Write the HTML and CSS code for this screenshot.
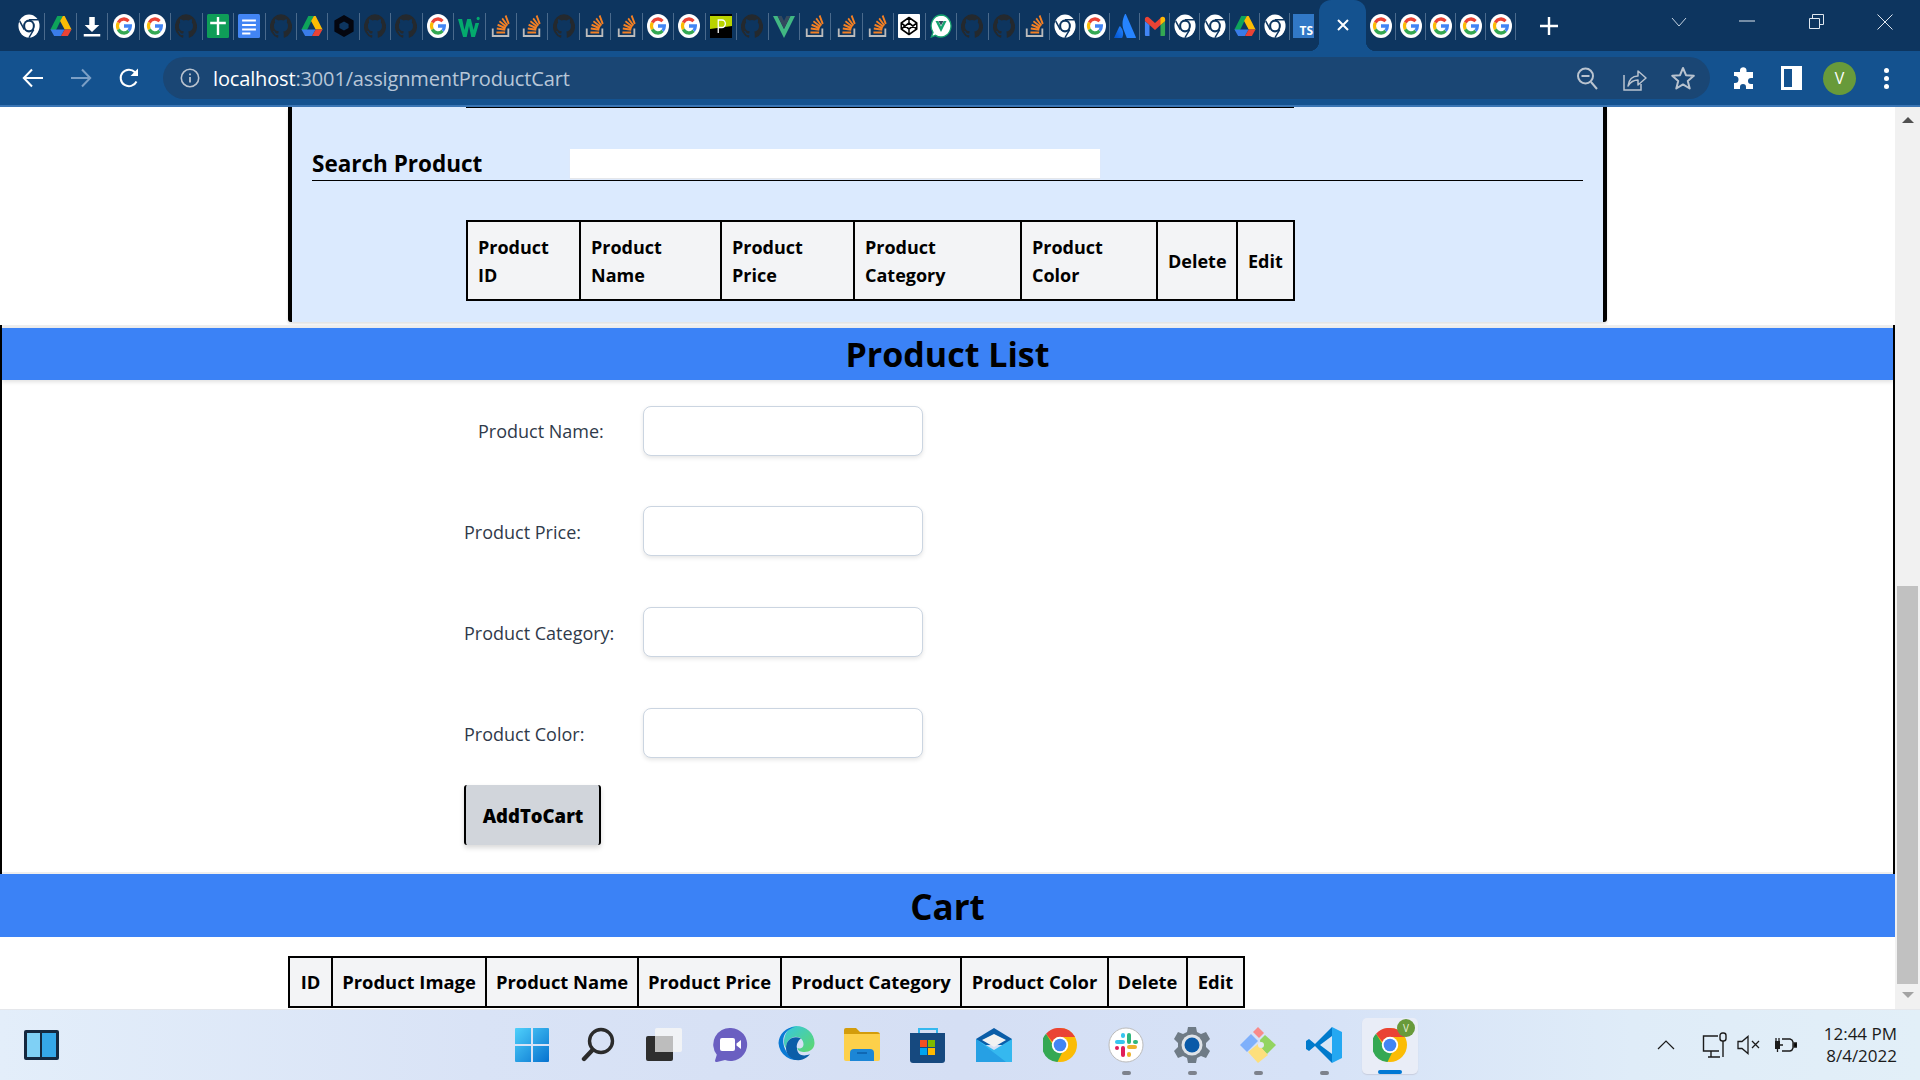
FILE: index.html
```html
<!DOCTYPE html>
<html lang="en">
<head>
<meta charset="UTF-8">
<title>assignmentProductCart</title>
<link rel="stylesheet" href="styles.css">
</head>
<body>
<!-- favicon sprite -->
<svg class="sprite" xmlns="http://www.w3.org/2000/svg">
    <defs>
        <linearGradient id="winGrad" x1="0" y1="0" x2="1" y2="1"><stop offset="0" stop-color="#4fd0fb"/><stop offset="1" stop-color="#0672cf"/></linearGradient>
        <linearGradient id="edgeGrad" x1="0" y1="0" x2="1" y2="1"><stop offset="0" stop-color="#36c7e0"/><stop offset="1" stop-color="#5fd86a"/></linearGradient>
        <linearGradient id="atlGrad" x1="0" y1="1" x2="1" y2="0"><stop offset="0" stop-color="#0052cc"/><stop offset="1" stop-color="#2684ff"/></linearGradient>
    </defs>
    <symbol id="ic-chrome" viewBox="0 0 24 24" preserveAspectRatio="none">
        <circle cx="12" cy="12" r="11.5" fill="#fff"/>
        <circle cx="12" cy="12" r="6.4" fill="#0d355f"/>
        <circle cx="12" cy="12" r="4.2" fill="#fff"/>
        <path d="M12 5.8h10M6.8 15.5 1.8 7M17.2 15.5 12 23.6" stroke="#0d355f" stroke-width="1.5" fill="none"/>
    </symbol>
    <symbol id="ic-drive" viewBox="0 0 24 24" preserveAspectRatio="none">
        <path d="M8 2h6L8 13.5 5.200 18 .5 15.500z" fill="#0ea45a"/>
        <path d="M14 2h2l7.500 13.500h-7.500L11 7z" fill="#fbbc04"/>
        <path d="M.5 15.500H16L12 22H4.500z" fill="#3a7ce8"/>
        <path d="M16 15.500h7.500L19.500 22H12z" fill="#ea4335"/>
    </symbol>
    <symbol id="ic-download" viewBox="0 0 24 24" preserveAspectRatio="none">
        <path d="M9 3h6v8h5l-8 7-8-7h5zM3 20h18v2.500H3z" fill="#fff"/>
    </symbol>
    <symbol id="ic-google" viewBox="0 0 24 24" preserveAspectRatio="none">
        <rect x="0" y="0" width="24" height="24" rx="12" fill="#fff"/>
        <g fill="none" stroke-width="3.400">
            <path d="M5.800 8.600A7 7 0 0 1 17 7.200" stroke="#ea4335"/>
            <path d="M5.800 8.600a7 7 0 0 0 0 6.800" stroke="#fbbc05"/>
            <path d="M5.800 15.400A7 7 0 0 0 17 16.800" stroke="#34a853"/>
            <path d="M17 16.800A7 7 0 0 0 19 12h-7" stroke="#4285f4"/>
        </g>
    </symbol>
    <symbol id="ic-github" viewBox="0 0 24 24" preserveAspectRatio="none">
        <path d="M12 .3a12 12 0 0 0-3.800 23.400c.6.1.8-.3.8-.6v-2c-3.300.7-4-1.600-4-1.600-.6-1.400-1.400-1.800-1.400-1.800-1-.7.1-.7.1-.7 1.200 0 1.900 1.200 1.900 1.200 1 1.800 2.800 1.300 3.500 1 0-.8.4-1.300.7-1.600-2.700-.3-5.500-1.300-5.500-6 0-1.200.5-2.300 1.300-3.100-.2-.4-.6-1.600 0-3.200 0 0 1-.3 3.400 1.200a11.500 11.500 0 0 1 6 0c2.300-1.500 3.300-1.200 3.300-1.200.6 1.600.2 2.800 0 3.200.9.8 1.300 1.900 1.300 3.200 0 4.600-2.800 5.600-5.500 5.900.5.4.9 1 .9 2.200v3.300c0 .3.1.7.8.6A12 12 0 0 0 12 .3" fill="#24292e"/>
    </symbol>
    <symbol id="ic-sheets" viewBox="0 0 24 24" preserveAspectRatio="none">
        <rect width="24" height="24" rx="1.500" fill="#0f9d58"/>
        <path d="M3.500 9h17M12 3v18" stroke="#fff" stroke-width="2.600"/>
    </symbol>
    <symbol id="ic-docs" viewBox="0 0 24 24" preserveAspectRatio="none">
        <rect width="24" height="24" rx="1.500" fill="#4285f4"/>
        <path d="M4.500 6.500h15M4.500 11h15M4.500 15.500h15M4.500 19.500h9" stroke="#fff" stroke-width="2"/>
    </symbol>
    <symbol id="ic-hex" viewBox="0 0 24 24" preserveAspectRatio="none">
        <path d="M12 1 22.500 6.500v11L12 23 1.500 17.500v-11zM12 7.500 7 10v4l5 2.500 5-2.500v-4z" fill="#04060f" fill-rule="evenodd"/>
    </symbol>
    <symbol id="ic-w3" viewBox="0 0 24 24" preserveAspectRatio="none">
        <path d="M0 5h4.500l2.500 11L10 5h4l3 11 2-7h4l-4.500 14h-4L12 12l-2.500 11h-4z" fill="#04aa6d"/>
        <circle cx="22" cy="4.500" r="1.700" fill="#04aa6d"/>
    </symbol>
    <symbol id="ic-so" viewBox="0 0 24 24" preserveAspectRatio="none">
        <path d="M3 14.500V22h17v-7.500" fill="none" stroke="#bcbbbb" stroke-width="2"/>
        <path d="M7 18.500h9.500M7.400 14.500l9.300 1.300M8.300 10.800l8.800 3.400M10.300 7.300l7.600 5.400M13.300 4.300l5.700 7.200M17 1.500l3.500 8.500" fill="none" stroke="#f48024" stroke-width="2"/>
    </symbol>
    <symbol id="ic-p" viewBox="0 0 24 24" preserveAspectRatio="none">
        <rect width="24" height="24" fill="#000"/>
        <path d="M0 2h24v10L0 15z" fill="#b9d300"/>
        <path d="M9 19V6h4a3.600 3.600 0 0 1 0 7.500H9" fill="none" stroke="#fff" stroke-width="1.400"/>
    </symbol>
    <symbol id="ic-vue" viewBox="0 0 24 24" preserveAspectRatio="none">
        <path d="M0 2h5l7 13L19 2h5L12 24z" fill="#41b883"/>
        <path d="M5 2h4.500L12 7l2.500-5H19l-7 13z" fill="#34495e"/>
    </symbol>
    <symbol id="ic-codepen" viewBox="0 0 24 24" preserveAspectRatio="none">
        <rect width="24" height="24" rx="1" fill="#fff"/>
        <path d="M12 3.500 20.500 9v6L12 20.500 3.500 15V9zM12 3.500V9M12 15v5.500M3.500 9 12 15l8.500-6M3.500 15 12 9l8.500 6" fill="none" stroke="#000" stroke-width="1.600" stroke-linejoin="round"/>
    </symbol>
    <symbol id="ic-vuechat" viewBox="0 0 24 24" preserveAspectRatio="none">
        <path d="M12 1a11 11 0 1 1-6 20.300L1.500 23l1.800-4.700A11 11 0 0 1 12 1" fill="#fff" stroke="#16a36f" stroke-width="1.400"/>
        <path d="M6 7h3l3 5.500L15 7h3l-6 11z" fill="#16a36f"/>
        <path d="M9.200 7h5.600L12 11.500z" fill="#34495e"/>
    </symbol>
    <symbol id="ic-atlassian" viewBox="0 0 24 24" preserveAspectRatio="none">
        <path d="M7 12.500c-.4-.5-1-.4-1.300.2L0 24h8.200c.5 0 .9-.3 1.100-.7 1.400-3.600.8-7.800-2.300-10.800z" fill="url(#atlGrad)"/>
        <path d="M12 0C8.700 6 8.500 11.700 11 17l3 7h9.500c.4 0 .6-.4.4-.8L13 .3c-.3-.5-.8-.5-1-.3z" fill="#2684ff"/>
    </symbol>
    <symbol id="ic-gmail" viewBox="0 0 24 24" preserveAspectRatio="none">
        <path d="M1 22V7l5 4v11H2a1 1 0 0 1-1-1z" fill="#4285f4"/>
        <path d="M18 22V11l5-4v14a1 1 0 0 1-1 1z" fill="#34a853"/>
        <path d="M6 11 1 7V5c0-2 2.500-3 4-1.800L12 9l7-5.800C20.500 2 23 3 23 5v2l-5 4-6 5z" fill="#ea4335"/>
        <path d="M18 11V3.700l1-.5C20.500 2 23 3 23 5v2z" fill="#fbbc04"/>
    </symbol>
</svg>

<div class="tabstrip">
    <div class="tab"><svg><use href="#ic-chrome"/></svg></div>
    <div class="tab"><svg><use href="#ic-drive"/></svg></div>
    <div class="tab"><svg><use href="#ic-download"/></svg></div>
    <div class="tab"><svg><use href="#ic-google"/></svg></div>
    <div class="tab"><svg><use href="#ic-google"/></svg></div>
    <div class="tab"><svg><use href="#ic-github"/></svg></div>
    <div class="tab"><svg><use href="#ic-sheets"/></svg></div>
    <div class="tab"><svg><use href="#ic-docs"/></svg></div>
    <div class="tab"><svg><use href="#ic-github"/></svg></div>
    <div class="tab"><svg><use href="#ic-drive"/></svg></div>
    <div class="tab"><svg><use href="#ic-hex"/></svg></div>
    <div class="tab"><svg><use href="#ic-github"/></svg></div>
    <div class="tab"><svg><use href="#ic-github"/></svg></div>
    <div class="tab"><svg><use href="#ic-google"/></svg></div>
    <div class="tab"><svg><use href="#ic-w3"/></svg></div>
    <div class="tab"><svg><use href="#ic-so"/></svg></div>
    <div class="tab"><svg><use href="#ic-so"/></svg></div>
    <div class="tab"><svg><use href="#ic-github"/></svg></div>
    <div class="tab"><svg><use href="#ic-so"/></svg></div>
    <div class="tab"><svg><use href="#ic-so"/></svg></div>
    <div class="tab"><svg><use href="#ic-google"/></svg></div>
    <div class="tab"><svg><use href="#ic-google"/></svg></div>
    <div class="tab"><svg><use href="#ic-p"/></svg></div>
    <div class="tab"><svg><use href="#ic-github"/></svg></div>
    <div class="tab"><svg><use href="#ic-vue"/></svg></div>
    <div class="tab"><svg><use href="#ic-so"/></svg></div>
    <div class="tab"><svg><use href="#ic-so"/></svg></div>
    <div class="tab"><svg><use href="#ic-so"/></svg></div>
    <div class="tab"><svg><use href="#ic-codepen"/></svg></div>
    <div class="tab"><svg><use href="#ic-vuechat"/></svg></div>
    <div class="tab"><svg><use href="#ic-github"/></svg></div>
    <div class="tab"><svg><use href="#ic-github"/></svg></div>
    <div class="tab narrow"><svg><use href="#ic-so"/></svg></div>
    <div class="tab narrow"><svg><use href="#ic-chrome"/></svg></div>
    <div class="tab narrow"><svg><use href="#ic-google"/></svg></div>
    <div class="tab narrow"><svg><use href="#ic-atlassian"/></svg></div>
    <div class="tab narrow"><svg><use href="#ic-gmail"/></svg></div>
    <div class="tab narrow"><svg><use href="#ic-chrome"/></svg></div>
    <div class="tab narrow"><svg><use href="#ic-chrome"/></svg></div>
    <div class="tab narrow"><svg><use href="#ic-drive"/></svg></div>
    <div class="tab narrow"><svg><use href="#ic-chrome"/></svg></div>
    <div class="tab-ts"><span class="ts-badge">TS</span></div>
    <div class="tab-active">
        <svg width="14" height="14" viewBox="0 0 14 14"><path d="M2 2l10 10M12 2 2 12" stroke="#fff" stroke-width="2"/></svg>
    </div>
    <div class="tab narrow"><svg><use href="#ic-google"/></svg></div>
    <div class="tab narrow"><svg><use href="#ic-google"/></svg></div>
    <div class="tab narrow"><svg><use href="#ic-google"/></svg></div>
    <div class="tab narrow"><svg><use href="#ic-google"/></svg></div>
    <div class="tab narrow"><svg><use href="#ic-google"/></svg></div>
    <svg class="new-tab" width="18" height="18" viewBox="0 0 18 18"><path d="M9 0v18M0 9h18" stroke="#fff" stroke-width="2.400"/></svg>
    <div class="window-btns">
        <svg width="16" height="10" viewBox="0 0 16 10"><path d="M1 1l7 8 7-8" fill="none" stroke="#c6d4e2" stroke-width="1"/></svg>
        <svg class="win-min" width="16" height="2" viewBox="0 0 16 2"><path d="M0 1h16" stroke="#dfe7ef" stroke-width="1"/></svg>
        <svg class="win-restore" width="15" height="15" viewBox="0 0 15 15"><path d="M.5 4.500h10v10H.5zM3.500 4.500v-4h11v10h-4" fill="none" stroke="#dfe7ef" stroke-width="1"/></svg>
        <svg class="win-close" width="16" height="16" viewBox="0 0 16 16"><path d="M.5.5l15 15M15.500.5l-15 15" stroke="#dfe7ef" stroke-width="1"/></svg>
    </div>
</div>

<div class="toolbar">
    <svg class="nav-back" width="22" height="20" viewBox="0 0 22 20"><path d="M21 10H2M10 1.500 1.800 10l8.200 8.500" fill="none" stroke="#fff" stroke-width="2"/></svg>
    <svg class="nav-forward" width="22" height="20" viewBox="0 0 22 20"><path d="M1 10h19M12 1.500l8.200 8.500-8.200 8.500" fill="none" stroke="#7b9fc6" stroke-width="2"/></svg>
    <svg class="nav-reload" width="22" height="22" viewBox="0 0 22 22"><path d="M18.500 14.500A8.300 8.300 0 1 1 17 5.200" fill="none" stroke="#fff" stroke-width="2"/><path d="M20 1.500V9h-7.500z" fill="#fff"/></svg>
    <div class="omnibox">
        <svg class="info" width="20" height="20" viewBox="0 0 20 20"><circle cx="10" cy="10" r="8.700" fill="none" stroke="#b9c3cf" stroke-width="1.600"/><path d="M10 9v5.500M10 5.500v1.800" stroke="#b9c3cf" stroke-width="1.800"/></svg>
        <span class="url"><span class="host">localhost</span>:3001/assignmentProductCart</span>
        <svg class="omni-zoom" width="22" height="24" viewBox="0 0 22 24"><circle cx="9.500" cy="10" r="7.500" fill="none" stroke="#b9c3cf" stroke-width="2"/><path d="M5.500 10h8M15 16l6 7" stroke="#b9c3cf" stroke-width="2"/></svg>
        <svg class="omni-share" width="24" height="26" viewBox="0 0 24 26"><path d="M1 10v15h17v-6" fill="none" stroke="#b9c3cf" stroke-width="1.500"/><path d="M5 21c1-7 5-10 10-10V6l8 7-8 7v-5c-4 0-7 1-10 6z" fill="none" stroke="#b9c3cf" stroke-width="1.500" stroke-linejoin="round"/></svg>
        <svg class="omni-star" width="24" height="24" viewBox="0 0 24 24"><path d="M12 2l3 7.200 7.800.6-6 5.100 1.900 7.600L12 18.400l-6.700 4.100 1.900-7.600-6-5.100L9 9.200z" fill="none" stroke="#b9c3cf" stroke-width="2" stroke-linejoin="round"/></svg>
    </div>
    <svg class="tool-puzzle" width="22" height="24" viewBox="0 0 22 24"><path d="M8 4a3.300 3.300 0 0 1 6.500 0v2H21v6h-2a3 3 0 0 0 0 6h2v5h-7v-2a3 3 0 0 0-6 0v2H2v-6h1a3.500 3.500 0 0 0 0-7H2V6h6z" fill="#fff"/></svg>
    <div class="tool-panel"><span></span></div>
    <div class="avatar">V</div>
    <div class="tool-dots"><span></span><span></span><span></span></div>
</div>

<div class="viewport">
    <main class="page">
        <div class="prev-rule"></div>
        <section class="search-panel">
            <div class="search-row">
                <label class="search-label" for="search">Search Product</label>
                <input class="search-input" id="search" type="text">
            </div>
            <table class="grid search-table">
                <thead>
                    <tr>
                        <th>Product<br>ID</th>
                        <th>Product<br>Name</th>
                        <th>Product<br>Price</th>
                        <th>Product<br>Category</th>
                        <th>Product<br>Color</th>
                        <th>Delete</th>
                        <th>Edit</th>
                    </tr>
                </thead>
            </table>
        </section>

        <section class="list-section">
            <h2 class="band list-band">Product List</h2>
            <form class="product-form">
                <div class="field">
                    <label class="first-label" for="pname">Product Name:</label>
                    <input id="pname" type="text">
                </div>
                <div class="field">
                    <label for="pprice">Product Price:</label>
                    <input id="pprice" type="text">
                </div>
                <div class="field">
                    <label for="pcat">Product Category:</label>
                    <input id="pcat" type="text">
                </div>
                <div class="field">
                    <label for="pcolor">Product Color:</label>
                    <input id="pcolor" type="text">
                </div>
                <button class="add-btn" type="button">AddToCart</button>
            </form>
        </section>

        <section class="cart-section">
            <h2 class="band cart-band">Cart</h2>
            <table class="grid cart-table">
                <thead>
                    <tr>
                        <th>ID</th>
                        <th>Product Image</th>
                        <th>Product Name</th>
                        <th>Product Price</th>
                        <th>Product Category</th>
                        <th>Product Color</th>
                        <th>Delete</th>
                        <th>Edit</th>
                    </tr>
                </thead>
            </table>
        </section>
    </main>
    <aside class="scrollbar">
        <span class="arrow-up"></span>
        <div class="track"><div class="thumb"></div></div>
        <span class="arrow-down"></span>
    </aside>
</div>

<footer class="taskbar">
    <svg class="widgets" width="37" height="32" viewBox="0 0 37 32">
        <rect x="1" y="1" width="35" height="30" rx="2" fill="#14283f"/>
        <rect x="4" y="4" width="13" height="24" fill="#7fd0f5"/>
        <rect x="19" y="4" width="14" height="24" fill="#35a7e8"/>
    </svg>
    <div class="apps">
        <div class="app">
            <svg width="36" height="36" viewBox="0 0 36 36"><path d="M1 2a1 1 0 0 1 1-1h15v16H1zM19 1h15a1 1 0 0 1 1 1v15H19zM1 19h16v16H2a1 1 0 0 1-1-1zM19 19h16v15a1 1 0 0 1-1 1H19z" fill="url(#winGrad)"/></svg>
        </div>
        <div class="app">
            <svg width="34" height="36" viewBox="0 0 34 36"><circle cx="20" cy="14" r="11.500" fill="none" stroke="#2b2b2b" stroke-width="3.400"/><path d="M11.500 23 3 32" stroke="#2b2b2b" stroke-width="4.400" stroke-linecap="round"/></svg>
        </div>
        <div class="app">
            <svg width="36" height="36" viewBox="0 0 36 36"><rect x="0" y="9" width="27" height="25" rx="2" fill="#2e2e2e"/><rect x="9" y="1" width="27" height="24" rx="2" fill="#f6f6f6" fill-opacity=".85"/><rect x="9" y="9" width="18" height="16" fill="#bdbdbd"/></svg>
        </div>
        <div class="app">
            <svg width="36" height="36" viewBox="0 0 36 36"><path d="M19 1a16.500 16.500 0 1 1-6 32l-8 2c-1.500.3-2.300-.8-1.800-2l1.600-5.300A16.500 16.500 0 0 1 19 1" fill="#6a5fc1"/><rect x="8" y="11" width="15" height="13" rx="2" fill="#fff"/><path d="M24.500 16.500 29 13v9l-4.500-3.500z" fill="#fff"/></svg>
        </div>
        <div class="app">
            <svg width="37" height="37" viewBox="0 0 37 37"><path d="M18 0C28 0 36.500 7 36.500 17c0 6-5 9-10 9-3.500 0-7-1-7-4 2 1 6 .5 6-3.500C25.500 12 19 9 13.500 12 8.500 14.800 8 20 8 22 3 16 8 0 18 0z" fill="url(#edgeGrad)"/><path d="M.5 17C1 8 8 1 17 1 9 3 4 9 5.500 18c1.500 9 9 17 19 15a18 18 0 0 1-24-16z" fill="#0a7ad4"/><path d="M8 22c0 8 8 14.500 16.500 11.500 3-1 6-3 7.500-5.500-6 3-13 1.500-13-6-1-2 1-8 4-9.500C15 9 8 14 8 22z" fill="#0b5ea8"/></svg>
        </div>
        <div class="app">
            <svg width="36" height="33" viewBox="0 0 36 33"><path d="M0 2a2 2 0 0 1 2-2h10l4 4h17a3 3 0 0 1 3 3v4H0z" fill="#d39c0b"/><path d="M0 6h36v25a2 2 0 0 1-2 2H2a2 2 0 0 1-2-2z" fill="#fdd04a"/><path d="M6 33v-8a4 4 0 0 1 4-4h16a4 4 0 0 1 4 4v8z" fill="#1c86d6"/><path d="M13 25h10" stroke="#0b5ea8" stroke-width="1.500"/></svg>
        </div>
        <div class="app">
            <svg width="36" height="36" viewBox="0 0 36 36"><path d="M9 6V2h18v4" fill="none" stroke="#35b8ef" stroke-width="2"/><path d="M0 6h35v27a3 3 0 0 1-3 3H3a3 3 0 0 1-3-3z" fill="#16497f"/><rect x="10" y="13" width="7" height="7" fill="#f25022"/><rect x="18" y="13" width="7" height="7" fill="#7fba00"/><rect x="10" y="21" width="7" height="7" fill="#00a4ef"/><rect x="18" y="21" width="7" height="7" fill="#ffb900"/></svg>
        </div>
        <div class="app">
            <svg width="36" height="34" viewBox="0 0 36 34"><path d="M0 11 18 0l18 11v6H0z" fill="#0a5da8"/><path d="M6 12 18 6l12 6-12 7z" fill="#f2f2f2"/><path d="M0 11l18 11 18-11v23H0z" fill="#35b8ef"/><path d="M0 34V11l30 23z" fill="#1c8fdc" fill-opacity=".6"/></svg>
        </div>
        <div class="app">
            <svg width="34" height="34" viewBox="0 0 34 34"><circle cx="17" cy="17" r="17" fill="#fbbc05"/><path d="M17 0a17 17 0 0 1 15 9H17a8 8 0 0 0-7.500 5L3 5.800A17 17 0 0 1 17 0z" fill="#ea4335"/><path d="M3 5.800 10 17a8 8 0 0 0 9 7.800L14.500 34A17 17 0 0 1 3 5.800z" fill="#34a853"/><circle cx="17" cy="17" r="8.200" fill="#fff"/><circle cx="17" cy="17" r="6.300" fill="#4285f4"/></svg>
        </div>
        <div class="app running">
            <svg width="36" height="36" viewBox="0 0 36 36"><circle cx="18" cy="18" r="17" fill="#fff" stroke="#bbb" stroke-width="1"/><g stroke-width="4" stroke-linecap="round"><path d="M21 8v7" stroke="#2eb67d"/><path d="M21 20h6" stroke="#ecb22e"/><path d="M15 28v-7" stroke="#e01e5a"/><path d="M15 15H9" stroke="#36c5f0"/><path d="M15 8v1" stroke="#36c5f0"/><path d="M28 15h-1" stroke="#2eb67d"/><path d="M21 27v1" stroke="#ecb22e"/><path d="M9 21h0" stroke="#e01e5a"/></g></svg>
        </div>
        <div class="app running">
            <svg width="36" height="36" viewBox="0 0 36 36"><path d="M14 0h8l1 5 4 2 5-2 4 7-4 4v4l4 4-4 7-5-2-4 2-1 5h-8l-1-5-4-2-5 2-4-7 4-4v-4L0 12l4-7 5 2 4-2z" fill="#6f7b86"/><circle cx="18" cy="18" r="10.500" fill="#dfe3e8"/><circle cx="18" cy="18" r="7.500" fill="#0a5aa8"/></svg>
        </div>
        <div class="app running">
            <svg width="36" height="36" viewBox="0 0 36 36"><path d="M13 5l5-5 6 6-5 5z" fill="#f88a8a"/><path d="M0 18 11 7l7 7-11 11z" fill="#7fb0fb"/><path d="M20 13l5-5 11 10-9 9-6-6z" fill="#93d461"/><path d="M8 25l10-8 10 11-10 8z" fill="#fddf7c"/><circle cx="21" cy="18" r="3" fill="#e4e9f2"/></svg>
        </div>
        <div class="app running">
            <svg width="36" height="36" viewBox="0 0 36 36"><path d="M26 0 36 5v26l-10 5z" fill="#24a8f2"/><path d="M26 0 9 17 3 12 0 14v8l3 2 6-5 17 17z" fill="#007acc"/><path d="M26 9v18L14 18z" fill="#dae6f6"/></svg>
        </div>
        <div class="app active">
            <div class="chrome-wrap">
                <svg width="34" height="34" viewBox="0 0 34 34"><circle cx="17" cy="17" r="17" fill="#fbbc05"/><path d="M17 0a17 17 0 0 1 15 9H17a8 8 0 0 0-7.500 5L3 5.800A17 17 0 0 1 17 0z" fill="#ea4335"/><path d="M3 5.800 10 17a8 8 0 0 0 9 7.800L14.500 34A17 17 0 0 1 3 5.800z" fill="#34a853"/><circle cx="17" cy="17" r="8.200" fill="#fff"/><circle cx="17" cy="17" r="6.300" fill="#4285f4"/></svg>
                <span class="chrome-badge">V</span>
            </div>
        </div>
    </div>
    <div class="tray">
        <svg class="tray-chevron" width="18" height="10" viewBox="0 0 18 10"><path d="M1 9l8-8 8 8" fill="none" stroke="#1b1b1b" stroke-width="1.200"/></svg>
        <svg class="tray-net" width="26" height="26" viewBox="0 0 26 26"><path d="M16 4H1.500v15H17M6 25h12M9 19v6" fill="none" stroke="#1b1b1b" stroke-width="1.400"/><rect x="18" y="1" width="6" height="8" rx="2.500" fill="none" stroke="#1b1b1b" stroke-width="1.400"/><path d="M21 9v16" stroke="#1b1b1b" stroke-width="1.400"/></svg>
        <svg class="tray-sound" width="24" height="20" viewBox="0 0 24 20"><path d="M1 6.500h4L11 1.500v17l-6-5H1z" fill="none" stroke="#1b1b1b" stroke-width="1.300"/><path d="M15 6l7 7M22 6l-7 7" stroke="#1b1b1b" stroke-width="1.300"/></svg>
        <svg class="tray-power" width="24" height="18" viewBox="0 0 24 18"><path d="M9 3h8a4 4 0 0 1 3 3v6a4 4 0 0 1-3 3H9" fill="none" stroke="#1b1b1b" stroke-width="1.400"/><rect x="2" y="5" width="5" height="8" fill="#1b1b1b"/><path d="M3 2v3M6 2v3M4.500 13v3M7 9h3M21 7h3v4h-3z" stroke="#1b1b1b" stroke-width="1.300"/></svg>
        <div class="clock">
            <span>12:44 PM</span>
            <span>8/4/2022</span>
        </div>
    </div>
</footer>
</body>
</html>
```

FILE: styles.css
```css
* {
    box-sizing: border-box;
}
html, body {
    margin: 0;
    height: 100%;
}
body {
    width: 1920px;
    height: 1080px;
    display: flex;
    flex-direction: column;
    overflow: hidden;
    font-family: "Open Sans", "Noto Sans", sans-serif;
    color: #000;
    background-color: #fff;
}
.sprite {
    position: absolute;
    width: 0;
    height: 0;
}

/* browser chrome */
.tabstrip {
    height: 51px;
    flex: none;
    display: flex;
    align-items: flex-start;
    padding-left: 14px;
    background-color: #0d355f;
}
.tab {
    width: 31.45px;
    height: 27px;
    margin-top: 13px;
    flex: none;
    display: flex;
    justify-content: center;
    padding-top: 1px;
    border-right: 1px solid #4a6a8c;
}
.tab svg {
    width: 22px;
    height: 24px;
}
.tab.narrow {
    width: 30px;
}
.tab-ts {
    width: 27px;
    height: 24px;
    margin-top: 14px;
    flex: none;
    display: flex;
    justify-content: center;
}
.ts-badge {
    width: 21px;
    height: 24px;
    display: flex;
    align-items: flex-end;
    justify-content: flex-end;
    padding-right: 1px;
    background-color: #3178c6;
    color: #fff;
    font-size: 12px;
    font-weight: 700;
    line-height: 15px;
}
.tab-active {
    position: relative;
    width: 47px;
    height: 51px;
    margin-left: 2px;
    flex: none;
    display: flex;
    justify-content: center;
    padding-top: 18px;
    background-color: #14528f;
    border-radius: 12px 12px 0 0;
}
.tab-active::before,
.tab-active::after {
    content: "";
    position: absolute;
    bottom: 0;
    width: 10px;
    height: 10px;
    background: radial-gradient(circle at 0 0, transparent 10px, #14528f 10.5px);
}
.tab-active::before {
    left: -10px;
}
.tab-active::after {
    right: -10px;
    background: radial-gradient(circle at 100% 0, transparent 10px, #14528f 10.5px);
}
.new-tab {
    margin: 17px 0 0 24px;
    flex: none;
}
.window-btns {
    position: relative;
    flex: 1;
}
.window-btns svg {
    position: absolute;
}
.window-btns svg:first-child {
    left: 113px;
    top: 17px;
}
.window-btns .win-min {
    left: 181px;
    top: 20px;
}
.window-btns .win-restore {
    left: 251px;
    top: 14px;
}
.window-btns .win-close {
    left: 319px;
    top: 14px;
}
.toolbar {
    height: 56px;
    flex: none;
    display: flex;
    align-items: center;
    background-color: #14528f;
    border-bottom: 2px solid #3a75b4;
}
.nav-back {
    margin-left: 22px;
}
.nav-forward {
    margin-left: 26px;
}
.nav-reload {
    margin-left: 26px;
}
.omnibox {
    width: 1547px;
    height: 42px;
    margin-left: 23px;
    display: flex;
    align-items: center;
    padding-left: 17px;
    background-color: #1a4674;
    border-radius: 21px;
}
.url {
    margin-left: 13px;
    flex: 1;
    color: #b7c6d8;
    font-size: 20px;
    letter-spacing: -.15px;
    white-space: nowrap;
}
.host {
    color: #fff;
}
.omni-share {
    margin-left: 25.5px;
}
.omni-star {
    margin: 0 15.5px 0 23.5px;
}
.tool-puzzle {
    margin-left: 22px;
}
.tool-panel {
    width: 21px;
    height: 24px;
    margin-left: 27px;
    flex: none;
    padding: 3px 10px 3px 3px;
    background-color: #fff;
}
.tool-panel span {
    display: block;
    height: 100%;
    background-color: #14528f;
}
.avatar {
    width: 33px;
    height: 33px;
    margin-left: 21px;
    flex: none;
    display: flex;
    align-items: center;
    justify-content: center;
    border-radius: 50%;
    background-color: #689a3a;
    color: #fff;
    font-size: 16px;
}
.tool-dots {
    margin-left: 28px;
    display: flex;
    flex-direction: column;
    gap: 3px;
}
.tool-dots span {
    width: 5px;
    height: 5px;
    border-radius: 50%;
    background-color: #fff;
}

/* page */
.viewport {
    height: 902px;
    flex: none;
    display: flex;
}
.page {
    width: 1895px;
    flex: none;
    overflow: hidden;
}
.prev-rule {
    width: 828px;
    height: 1px;
    margin-left: 466px;
    background-color: #000;
    position: relative;
    z-index: 1;
    margin-bottom: -1px;
}
.search-panel {
    width: 1319px;
    height: 215px;
    margin-left: 288px;
    padding: 42px 20px 0;
    background-color: #dbeafe;
    border-left: 4px solid #000;
    border-right: 4px solid #000;
    border-radius: 0 0 3px 3px;
    box-shadow: 0 2px 3px rgba(0, 0, 0, .12);
}
.search-row {
    display: flex;
    height: 32px;
    border-bottom: 1px solid #000;
}
.search-label {
    width: 258px;
    font-size: 22.5px;
    font-weight: 700;
    line-height: 29px;
}
.search-input {
    width: 530px;
    height: 29px;
    border: none;
    background-color: #fff;
    box-shadow: 0 1px 1px #e5e7eb;
}
.grid {
    border-collapse: collapse;
    table-layout: fixed;
    border: 2px solid #000;
}
.grid th {
    padding: 0;
    border: 2px solid #000;
    background-color: #f3f4f6;
    font-size: 18px;
    font-weight: 700;
    line-height: 28px;
    text-align: left;
}
.search-table {
    width: 827px;
    height: 81px;
    margin: 39px 0 0 154px;
}
.search-table th {
    padding-left: 10px;
}
.search-table th:nth-child(1) { width: 113px; }
.search-table th:nth-child(2) { width: 141px; }
.search-table th:nth-child(3) { width: 133px; }
.search-table th:nth-child(4) { width: 167px; }
.search-table th:nth-child(5) { width: 136px; }
.search-table th:nth-child(6) { width: 80px; }
.search-table th:nth-child(7) { width: 57px; }

.band {
    margin: 0;
    background-color: #3b82f6;
    font-weight: 700;
    text-align: center;
    box-shadow: 0 2px 4px rgba(0, 0, 0, .12);
}
.list-section {
    height: 549px;
    margin-top: 3px;
    padding-top: 3px;
    border-left: 2px solid #000;
    border-right: 2px solid #000;
    background-color: #fff;
    box-shadow: inset 0 3px 0 #eeeeee, inset 0 -2px 0 #eeeeee;
}
.list-band {
    height: 52px;
    font-size: 34px;
    line-height: 52px;
}
.product-form {
    padding: 26px 0 0 462px;
    display: flex;
    flex-direction: column;
    align-items: flex-start;
    gap: 50px;
}
.field {
    display: flex;
    align-items: center;
}
.field:nth-child(n+3) {
    margin-top: 1px;
}
.field label {
    width: 179px;
    padding-top: 1px;
    font-size: 18px;
    color: #2f3a4a;
}
.field .first-label {
    padding-top: 0;
    padding-left: 14px;
}
.field input {
    width: 280px;
    height: 50px;
    border: 1px solid #cbd5e1;
    border-radius: 8px;
    background-color: #fff;
    box-shadow: 0 2px 4px rgba(0, 0, 0, .1);
}
.add-btn {
    width: 137px;
    height: 60px;
    margin-top: -23px;
    padding: 0 0 0 1px;
    border: none;
    border-left: 2px solid #000;
    border-right: 2px solid #000;
    border-radius: 3px;
    background-color: #d1d5db;
    box-shadow: 0 3px 5px rgba(0, 0, 0, .15);
    font-family: inherit;
    font-size: 18.5px;
    font-weight: 800;
    color: #000;
}
.cart-band {
    height: 63px;
    font-size: 35px;
    line-height: 65px;
    box-shadow: none;
}
.cart-table {
    width: 955px;
    height: 52px;
    margin: 19px 0 0 288px;
}
.cart-table th {
    font-size: 18.4px;
    text-align: center;
}
.cart-table th:nth-child(1) { width: 43px; }
.cart-table th:nth-child(2) { width: 154px; }
.cart-table th:nth-child(3) { width: 152px; }
.cart-table th:nth-child(4) { width: 143px; }
.cart-table th:nth-child(5) { width: 180px; }
.cart-table th:nth-child(6) { width: 147px; }
.cart-table th:nth-child(7) { width: 79px; }
.cart-table th:nth-child(8) { width: 57px; }

/* scrollbar */
.scrollbar {
    width: 25px;
    flex: none;
    display: flex;
    flex-direction: column;
    align-items: center;
    background-color: #f1f1f1;
    padding-top: 10px;
}
.arrow-up {
    width: 0;
    height: 0;
    flex: none;
    border: 6px solid transparent;
    border-top: none;
    border-bottom: 6px solid #505050;
}
.track {
    width: 21px;
    height: 866px;
    flex: none;
    padding-top: 463px;
}
.thumb {
    height: 398px;
    background-color: #c1c1c1;
}
.arrow-down {
    width: 0;
    height: 0;
    flex: none;
    margin-top: 3px;
    border: 6px solid transparent;
    border-bottom: none;
    border-top: 6px solid #a3a3a3;
}

/* taskbar */
.taskbar {
    height: 71px;
    flex: none;
    display: flex;
    align-items: center;
    padding: 0 23px 0 23px;
    background: linear-gradient(90deg, #e3eefa 0%, #d9e3f6 25%, #d5dff4 50%, #d6e2f7 68%, #dfecf8 85%, #e2eff8 100%);
    border-top: 1px solid #e5e7eb;
}
.widgets {
    flex: none;
    margin-top: -1px;
}
.apps {
    margin-left: 439px;
    display: flex;
    height: 100%;
}
.app {
    position: relative;
    width: 66px;
    flex: none;
    display: flex;
    align-items: center;
    justify-content: center;
    padding-bottom: 1px;
}
.app.running::after {
    content: "";
    position: absolute;
    bottom: 5px;
    width: 9px;
    height: 4px;
    border-radius: 2px;
    background-color: #7d828c;
}
.app.active::before {
    content: "";
    position: absolute;
    left: 5px;
    right: 5px;
    top: 8px;
    bottom: 6px;
    border-radius: 5px;
    background-color: #e9edf7;
    box-shadow: 0 1px 1px #c8cede;
}
.app.active::after {
    content: "";
    position: absolute;
    bottom: 6px;
    left: 21px;
    width: 24px;
    height: 4px;
    border-radius: 2px;
    background-color: #0078d4;
}
.chrome-wrap {
    position: relative;
    height: 34px;
}
.chrome-badge {
    position: absolute;
    top: -9px;
    right: -8px;
    width: 18px;
    height: 18px;
    display: flex;
    align-items: center;
    justify-content: center;
    border-radius: 50%;
    background-color: #689a3a;
    color: #e6f0d8;
    font-size: 10px;
}
.tray {
    margin-left: auto;
    display: flex;
    align-items: center;
}
.tray-net {
    margin-left: 27px;
}
.tray-sound {
    margin-left: 9px;
}
.tray-power {
    margin-left: 12px;
}
.clock {
    width: 80px;
    margin-left: 20px;
    display: flex;
    flex-direction: column;
    align-items: flex-end;
    font-size: 17px;
    line-height: 22px;
    color: #1b1b1b;
}
```
